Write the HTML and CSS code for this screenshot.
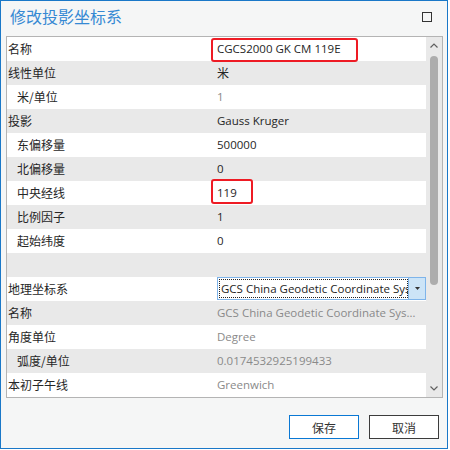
FILE: index.html
```html
<!DOCTYPE html>
<html lang="zh-CN">
<head>
<meta charset="utf-8">
<title>修改投影坐标系</title>
<link rel="stylesheet" href="styles.css">
</head>
<body>
<div class="window">
  <div class="titlebar">
    <div class="title">修改投影坐标系</div>
    <div class="maximize"></div>
  </div>
  <div class="grid">
    <div class="rows">
      <div class="row"><div class="label">名称</div><div class="value">CGCS2000 GK CM 119E<span class="mark mark-name"></span></div></div>
      <div class="row"><div class="label">线性单位</div><div class="value cjk">米</div></div>
      <div class="row"><div class="label sub">米/单位</div><div class="value dim">1</div></div>
      <div class="row"><div class="label">投影</div><div class="value">Gauss Kruger</div></div>
      <div class="row"><div class="label sub">东偏移量</div><div class="value">500000</div></div>
      <div class="row"><div class="label sub">北偏移量</div><div class="value">0</div></div>
      <div class="row"><div class="label sub">中央经线</div><div class="value">119<span class="mark mark-cm"></span></div></div>
      <div class="row"><div class="label sub">比例因子</div><div class="value">1</div></div>
      <div class="row"><div class="label sub">起始纬度</div><div class="value">0</div></div>
      <div class="row"><div class="label"></div><div class="value"></div></div>
      <div class="row"><div class="label">地理坐标系</div><div class="value">
        <div class="combo">
          <div class="combo-text"><span>GCS China Geodetic Coordinate System 2000</span></div>
          <div class="combo-btn"><svg width="5" height="3" viewBox="0 0 5 3"><path d="M0 0H5L2.5 3Z" fill="#333"/></svg></div>
        </div>
      </div></div>
      <div class="row"><div class="label">名称</div><div class="value dim ellipsis">GCS China Geodetic Coordinate System 2000</div></div>
      <div class="row"><div class="label">角度单位</div><div class="value dim">Degree</div></div>
      <div class="row"><div class="label sub">弧度/单位</div><div class="value dim">0.0174532925199433</div></div>
      <div class="row"><div class="label">本初子午线</div><div class="value dim">Greenwich</div></div>
    </div>
    <div class="scrollbar">
      <div class="sb-btn"><svg width="8" height="5" viewBox="0 0 8 5"><path d="M0.5 4.5L4 1L7.5 4.5" fill="none" stroke="#606060" stroke-width="1.2"/></svg></div>
      <div class="sb-track"><div class="thumb"></div></div>
      <div class="sb-btn"><svg width="8" height="5" viewBox="0 0 8 5"><path d="M0.5 0.5L4 4L7.5 0.5" fill="none" stroke="#606060" stroke-width="1.2"/></svg></div>
    </div>
  </div>
  <div class="footer">
    <button class="btn primary">保存</button>
    <button class="btn">取消</button>
  </div>
</div>
</body>
</html>
```

FILE: styles.css
```css
html, body {
  margin: 0;
  padding: 0;
  background: #ffffff;
}

.window {
  box-sizing: border-box;
  width: 448px;
  height: 449px;
  border: 1px solid #1a78c8;
  background: #f5f6f6;
  font-family: "Open Sans", "Noto Sans CJK SC", sans-serif;
  color: #262626;
  display: flex;
  flex-direction: column;
}

.titlebar {
  height: 35px;
  display: flex;
  align-items: flex-start;
  justify-content: space-between;
  padding: 0 15px 0 9px;
}

.title {
  font-family: "Noto Sans CJK SC", sans-serif;
  font-size: 16px;
  line-height: 16px;
  margin-top: 7px;
  color: #3589d3;
}

.maximize {
  box-sizing: border-box;
  width: 10px;
  height: 10px;
  margin-top: 11px;
  border: 1px solid #333333;
}

.grid {
  box-sizing: border-box;
  margin-left: 5px;
  width: 437px;
  height: 362px;
  border: 1px solid #b4b4b4;
  display: flex;
  background: #ffffff;
}

.rows {
  width: 419px;
  display: flex;
  flex-direction: column;
}

.row {
  height: 24px;
  display: grid;
  grid-template-columns: 204px 1fr;
  background: #ffffff;
  font-size: 12px;
  line-height: 24px;
}

.row:nth-child(even) {
  background: #e9e9e9;
}

.label {
  padding-left: 1px;
  font-family: "Noto Sans CJK SC", sans-serif;
  white-space: nowrap;
}

.label.sub {
  padding-left: 10px;
}

.value {
  position: relative;
  padding-left: 6px;
  white-space: nowrap;
  font-family: "Open Sans", "Noto Sans CJK SC", sans-serif;
  font-size: 11.5px;
  min-width: 0;
}

.value.cjk {
  font-family: "Noto Sans CJK SC", sans-serif;
  font-size: 12px;
}

.value.dim {
  color: #8a8a8a;
}

.value.ellipsis {
  overflow: hidden;
  text-overflow: ellipsis;
  padding-right: 8px;
}

.mark {
  position: absolute;
  left: 0;
  border: 2px solid #ee1b24;
  border-radius: 3px;
  box-sizing: border-box;
}

.mark-name {
  top: 1px;
  width: 147px;
  height: 24px;
}

.mark-cm {
  top: -2px;
  width: 42px;
  height: 25px;
}

.combo {
  box-sizing: border-box;
  width: 209px;
  height: 23px;
  border: 1px solid #7eb4ea;
  background: #ffffff;
  display: flex;
}

.combo-text {
  flex: 1;
  min-width: 0;
  margin: 1px 0 1px 1px;
  outline: 1px dotted #222;
  outline-offset: -1px;
  overflow: hidden;
  white-space: nowrap;
  line-height: 19px;
  padding-left: 2px;
  color: #1e1e1e;
}

.combo-btn {
  width: 16px;
  background: #cce4f7;
  border-left: 1px solid #7eb4ea;
  display: flex;
  align-items: center;
  justify-content: center;
}

.scrollbar {
  width: 16px;
  background: #e9e9e9;
  display: flex;
  flex-direction: column;
}

.sb-btn {
  height: 17px;
  display: flex;
  align-items: center;
  justify-content: center;
}

.sb-track {
  flex: 1;
  padding-top: 2px;
  display: flex;
  justify-content: center;
}

.thumb {
  width: 8px;
  height: 229px;
  border-radius: 4px;
  background: #adadad;
}

.footer {
  display: flex;
  justify-content: flex-end;
  gap: 10px;
  padding: 17px 8px 0 0;
}

.btn {
  box-sizing: border-box;
  width: 70px;
  height: 24px;
  margin: 0;
  padding: 0;
  border: 1px solid #3c3c3c;
  background: #ffffff;
  font-family: "Noto Sans CJK SC", sans-serif;
  font-size: 12px;
  color: #333333;
}

.btn.primary {
  border-color: #0a78d4;
}
```
